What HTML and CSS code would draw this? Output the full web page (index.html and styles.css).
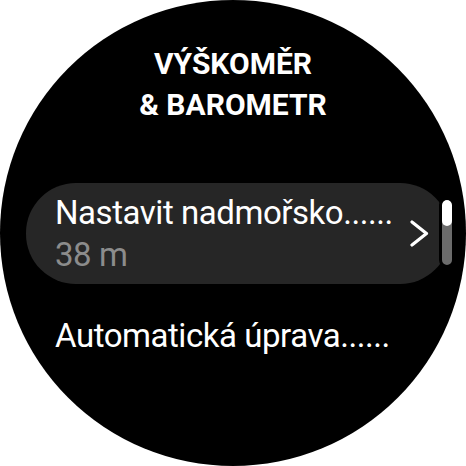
FILE: index.html
```html
<!DOCTYPE html>
<html>
<head>
<meta charset="utf-8">
<link rel="stylesheet" href="styles.css">
</head>
<body>
<div class="watch">
  <h1 class="title">VÝŠKOMĚR<br>&amp; BAROMETR</h1>
  <div class="list">
    <div class="item active">
      <div class="texts">
        <div class="label">Nastavit nadmořsko......</div>
        <div class="value">38 m</div>
      </div>
      <svg class="chev" width="19" height="27" viewBox="0 0 19 27"><path d="M2 2 L16.5 13.5 L2 25" fill="none" stroke="#fff" stroke-width="3.2" stroke-linecap="round" stroke-linejoin="round"/></svg>
    </div>
    <div class="item plain">
      <div class="label">Automatická úprava......</div>
    </div>
  </div>
  <div class="scrollbar"><div class="thumb"></div></div>
</div>
</body>
</html>
```
FILE: styles.css
```css
html, body {
  margin: 0;
  padding: 0;
  background: #fff;
}
.watch {
  position: relative;
  width: 466px;
  height: 466px;
  border-radius: 50%;
  background: #000;
  overflow: hidden;
  color: #fff;
  font-family: Roboto, "Noto Sans", sans-serif;
  padding-top: 43px;
  box-sizing: border-box;
}
.title {
  margin: 0;
  text-align: center;
  font-size: 30px;
  font-weight: 700;
  line-height: 41px;
}
.list {
  margin-top: 58px;
  display: flex;
  flex-direction: column;
  gap: 31px;
}
.item {
  margin-left: 26px;
  width: 424px;
  box-sizing: border-box;
  padding: 0 21px 0 29px;
  display: flex;
  align-items: center;
  justify-content: space-between;
}
.item.active {
  height: 101px;
  border-radius: 50px;
  background: #262626;
}
.label, .value {
  font-size: 33px;
  line-height: 42px;
  letter-spacing: -0.45px;
  white-space: nowrap;
}
.value {
  color: #8c8c8c;
}
.chev {
  display: block;
}
.scrollbar {
  position: absolute;
  left: 439px;
  top: 197px;
  width: 10px;
  height: 65px;
  border: 3px solid #000;
  border-radius: 8px;
  background: #6b6b6b;
  overflow: hidden;
}
.thumb {
  height: 26px;
  background: #fff;
  border-radius: 5px;
}
```
